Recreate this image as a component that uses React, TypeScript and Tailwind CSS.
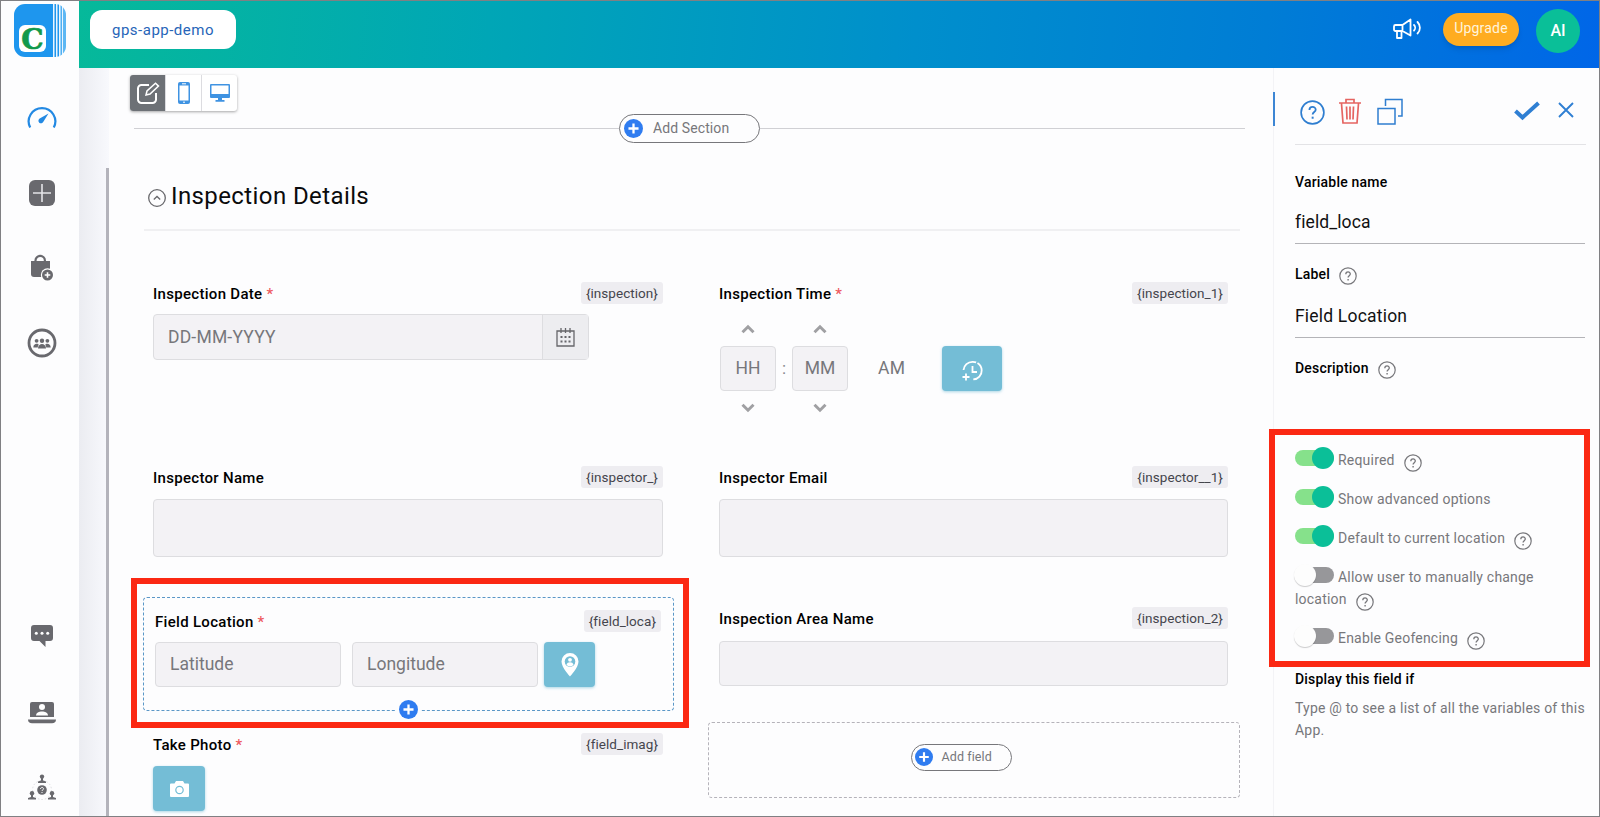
import type { ReactNode } from "react";
import clsx from "clsx";

interface FieldProps {
  label: string;
  variable: string;
  required?: boolean;
  className?: string;
  children?: ReactNode;
}

interface OptionProps {
  label: string;
  on?: boolean;
  help?: boolean;
}

const inputClass =
  "flex items-center rounded border border-[#dddde0] bg-[#f3f2f5] text-[17.5px] text-[#77777b]";

const actionClass =
  "flex items-center justify-center rounded bg-[#74bdd6] text-white shadow-[0_1px_3px_rgba(116,189,214,0.6)]";

function Logo() {
  return (
    <svg width="52" height="54" viewBox="0 0 52 54">
      <defs>
        <clipPath id="logo-clip">
          <rect x="0" y="0" width="52" height="53" rx="11" />
        </clipPath>
      </defs>
      <g clipPath="url(#logo-clip)">
        <rect width="52" height="53" fill="#eaf5ff" />
        <rect width="39" height="53" fill="#1e96ee" />
        <rect x="40.5" width="1.5" height="53" fill="#1e96ee" />
        <rect x="43.5" width="1.5" height="53" fill="#1e96ee" />
        <rect x="46.5" width="1.5" height="53" fill="#4fb0f2" />
        <rect x="49" width="3" height="53" fill="#5db7f3" />
      </g>
      <rect x="5" y="21" width="27" height="27" rx="6" fill="#fff" />
      <text
        x="18.5"
        y="45"
        textAnchor="middle"
        fontFamily="'DejaVu Serif', serif"
        fontWeight="700"
        fontSize="28"
        stroke="#12994b"
        strokeWidth="0.7"
        fill="#12994b"
      >
        C
      </text>
    </svg>
  );
}

function GaugeIcon() {
  return (
    <svg width="30" height="24" viewBox="0 0 30 24" fill="none">
      <path
        d="M3.2 22.5A13.3 13.3 0 1 1 26.8 22.5"
        stroke="#2389e3"
        strokeWidth="2.2"
      />
      <path d="M21.5 8.5l-5 8a2.6 2.6 0 1 1-3.4-3.2z" fill="#2389e3" />
    </svg>
  );
}

function PlusSquareIcon() {
  return (
    <svg width="26" height="26" viewBox="0 0 26 26">
      <rect width="26" height="26" rx="6" fill="#69696e" />
      <path d="M13 4v18M4 13h18" stroke="#e4e4e8" strokeWidth="1.6" />
    </svg>
  );
}

function BagIcon() {
  return (
    <svg width="24" height="28" viewBox="0 0 24 28" fill="none">
      <path d="M5.5 9V6.500a4.700 4.700 0 0 1 9.400 0V9" stroke="#69696e" strokeWidth="2.2" />
      <path d="M1 7h19v16H4a3 3 0 0 1-3-3z" fill="#69696e" />
      <circle cx="17.5" cy="21" r="6.7" fill="#fff" />
      <circle cx="17.5" cy="21" r="5.5" fill="#69696e" />
      <path d="M17.5 18.2v5.6M14.7 21h5.6" stroke="#fff" strokeWidth="1.6" />
    </svg>
  );
}

function CommunityIcon() {
  return (
    <svg width="30" height="30" viewBox="0 0 30 30">
      <circle cx="15" cy="15" r="13" fill="none" stroke="#69696e" strokeWidth="2.8" />
      <g fill="#69696e">
        <circle cx="9.6" cy="12.8" r="1.9" />
        <circle cx="20.4" cy="12.8" r="1.9" />
        <circle cx="15" cy="12.8" r="2.2" />
        <path d="M6.3 19.5c0-4.500 5-4.500 5.500-2.500-.8.7-1 1.500-1 2.500z" />
        <path d="M23.7 19.5c0-4.500-5-4.500-5.500-2.500.8.7 1 1.500 1 2.500z" />
        <path d="M11 20.5c0-6 8-6 8 0z" />
      </g>
    </svg>
  );
}

function ChatIcon() {
  return (
    <svg width="24" height="24" viewBox="0 0 24 24" fill="#69696e">
      <path d="M4 1h16a3 3 0 0 1 3 3v10a3 3 0 0 1-3 3h-4.500v6L9.500 17H4a3 3 0 0 1-3-3V4a3 3 0 0 1 3-3z" />
      <g fill="#fff">
        <circle cx="6.3" cy="9.3" r="1.5" />
        <circle cx="12" cy="9.3" r="1.5" />
        <circle cx="17.7" cy="9.3" r="1.5" />
      </g>
    </svg>
  );
}

function LaptopUserIcon() {
  return (
    <svg width="28" height="24" viewBox="0 0 28 24" fill="#69696e">
      <path d="M4 1h20a2 2 0 0 1 2 2v13H2V3a2 2 0 0 1 2-2z" />
      <circle cx="14" cy="6" r="3" fill="#fff" />
      <path d="M8 14.500c0-5.500 12-5.500 12 0z" fill="#fff" />
      <path d="M0 18.500h28c0 2.600-1.500 3.700-4 3.700H4c-2.500 0-4-1.100-4-3.700z" />
    </svg>
  );
}

function NetworkIcon() {
  return (
    <svg width="28" height="26" viewBox="0 0 28 26">
      <circle cx="14" cy="16" r="9.5" fill="none" stroke="#dcdce0" strokeDasharray="1.5 2" />
      <g fill="#69696e">
        <circle cx="14" cy="2.6" r="2.2" />
        <path d="M13 4h2v2.500l3 1V9h-8V7.500l3-1z" />
        <circle cx="4" cy="19.2" r="2.2" />
        <path d="M3 20h2v3l3 1v1.500H0V24l3-1z" />
        <circle cx="24" cy="19.2" r="2.2" />
        <path d="M23 20h2v3l3 1v1.500h-8V24l3-1z" />
        <circle cx="14" cy="16" r="4.8" />
      </g>
      <path
        d="M12.5 15c0-2 3-2 3-.2 0 1.200-1.500 1-1.500 2.200M14 18v1"
        fill="none"
        stroke="#fff"
      />
    </svg>
  );
}

function HelpIcon({ size = 18, className }: { size?: number; className?: string }) {
  return (
    <svg
      width={size}
      height={size}
      viewBox="0 0 18 18"
      fill="none"
      stroke="currentColor"
      className={className}
    >
      <circle cx="9" cy="9" r="8.2" strokeWidth="1.2" />
      <path d="M6.8 7.200c0-3 4.500-2.900 4.500-.2 0 1.700-2.200 1.700-2.200 3.500" strokeWidth="1.3" />
      <path d="M9.1 12v1.500" strokeWidth="1.4" />
    </svg>
  );
}

function PlusCircle({ size }: { size: number }) {
  return (
    <svg width={size} height={size} viewBox="0 0 20 20" className="shrink-0">
      <circle cx="10" cy="10" r="10" fill="#2f7cf0" />
      <path d="M10 4.700v10.600M4.700 10h10.600" stroke="#fff" strokeWidth="2.4" />
    </svg>
  );
}

function Caret({ down }: { down?: boolean }) {
  return (
    <svg
      width="14"
      height="10"
      viewBox="0 0 14 10"
      fill="none"
      className={down ? "rotate-180" : undefined}
    >
      <path d="M1.5 8.200L7 2.800l5.500 5.400" stroke="#a0a0a3" strokeWidth="3" />
    </svg>
  );
}

function VariableTag({ children }: { children: ReactNode }) {
  return (
    <span className="flex h-[22px] items-center rounded-[3px] bg-[#eeedf1] px-[5px] text-[13.5px] tracking-[0.05px] text-[#45454d]">
      {children}
    </span>
  );
}

function Field({ label, variable, required, className, children }: FieldProps) {
  return (
    <div className={clsx("flex flex-col", className)}>
      <div className="flex h-[22px] items-center justify-between">
        <span className="pt-0.5 text-[15px] font-medium tracking-[0.3px] text-black">
          {label}
          {required && <span className="text-[#ee5a5f]"> *</span>}
        </span>
        <VariableTag>{variable}</VariableTag>
      </div>
      {children}
    </div>
  );
}

function TimeUnit({ unit }: { unit: string }) {
  return (
    <div className="flex w-14 flex-col items-center">
      <Caret />
      <div className={clsx(inputClass, "my-3 h-[45px] w-full justify-center")}>{unit}</div>
      <Caret down />
    </div>
  );
}

function Option({ label, on, help }: OptionProps) {
  return (
    <p className="mb-[17px] leading-[22px]">
      <span
        className={clsx(
          "relative -my-1 mr-1 inline-block h-4 w-[39px] rounded-full align-[3px]",
          on ? "bg-[#86e18b]" : "bg-[#97979a]"
        )}
      >
        <span
          className={clsx(
            "absolute -top-[3px] size-[22px] rounded-full",
            on
              ? "right-0 bg-[#0bbf98]"
              : "-left-px bg-[#fdfdfd] shadow-[0_1px_1px_rgba(0,0,0,0.2)]"
          )}
        />
      </span>
      {label}
      {help && <HelpIcon className="-my-1 ml-[9px] inline-block align-[-3px]" />}
    </p>
  );
}

function Sidebar() {
  return (
    <aside className="flex w-[78px] shrink-0 flex-col items-center bg-[#fdfdfe]">
      <div className="mt-[3px]">
        <Logo />
      </div>
      <nav className="mt-[47px] ml-1 flex flex-1 flex-col items-center">
        <GaugeIcon />
        <div className="mt-[51px]">
          <PlusSquareIcon />
        </div>
        <div className="mt-12">
          <BagIcon />
        </div>
        <div className="mt-[46px]">
          <CommunityIcon />
        </div>
        <div className="mt-auto mb-[53px]">
          <ChatIcon />
        </div>
        <div className="mb-[49px]">
          <LaptopUserIcon />
        </div>
        <div className="mb-[16px]">
          <NetworkIcon />
        </div>
      </nav>
    </aside>
  );
}

function TopBar() {
  return (
    <header className="flex h-[67px] shrink-0 items-start bg-linear-[95deg,#06b99a_0%,#00a6b6_27%,#008fcc_55%,#007dd5_78%,#0066e8_100%]">
      <div className="mt-[9px] ml-[11px] flex h-[39px] w-[146px] items-center justify-center rounded-xl bg-white pt-0.5 text-[15px] tracking-[0.5px] text-[#2765b8]">
        gps-app-demo
      </div>
      <div className="ml-auto flex items-start">
        <svg
          width="30"
          height="22"
          viewBox="0 0 30 22"
          fill="none"
          stroke="#fff"
          strokeWidth="1.8"
          strokeLinejoin="round"
          strokeLinecap="round"
          className="mt-[17px] mr-[21px]"
        >
          <path d="M3.5 7h7l8-5.500v16l-8-4.500h-7A1.500 1.500 0 0 1 2 11.500v-3A1.500 1.500 0 0 1 3.500 7zM10.500 7v6M5 13v7h4.500v-7" />
          <path d="M22 7c1.500 1.500 1.500 4 0 5.500M25.500 4c3.200 3.200 3.200 8.500 0 11.500" />
        </svg>
        <div className="mt-3 flex h-[33px] w-[76px] items-center justify-center rounded-full bg-[#ffac20] pb-0.5 text-[14px] tracking-[0.2px] text-[#fff4dc] shadow-md">
          Upgrade
        </div>
        <div className="mt-2 mr-[19px] ml-[17px] flex size-11 items-center justify-center rounded-full bg-[#0abf98] text-[16px] font-medium text-white">
          AI
        </div>
      </div>
    </header>
  );
}

function ViewSwitch() {
  return (
    <div className="ml-[21px] flex h-9 w-[107px] divide-x divide-[#dcdce0] overflow-hidden rounded-[3px] bg-white shadow-[0_1px_3px_rgba(0,0,0,0.35)]">
      <div className="flex flex-1 items-center justify-center bg-[#6d7176]">
        <svg width="24" height="24" viewBox="0 0 24 24" fill="none" stroke="#fff" strokeWidth="2">
          <path d="M13 4H5.500A3.500 3.500 0 0 0 2 7.500v11A3.500 3.500 0 0 0 5.500 22h11a3.500 3.500 0 0 0 3.500-3.500V12" />
          <path d="M10 14l1-4 8.500-7.700 3 2.800L14 13z" strokeWidth="1.5" />
        </svg>
      </div>
      <div className="flex flex-1 items-center justify-center">
        <svg width="12" height="22" viewBox="0 0 12 22">
          <rect width="12" height="22" rx="2" fill="#3f93e2" />
          <rect x="1.500" y="3.500" width="9" height="15" fill="#fff" />
          <path d="M4 1.800h4M5 20.200h2" stroke="#fff" />
        </svg>
      </div>
      <div className="flex flex-1 items-center justify-center">
        <svg width="20" height="18" viewBox="0 0 20 18" fill="#3f93e2">
          <path d="M1 0h18a1 1 0 0 1 1 1v12a1 1 0 0 1-1 1H1a1 1 0 0 1-1-1V1a1 1 0 0 1 1-1z" />
          <path d="M1.5 1.500h17V10h-17z" fill="#fff" />
          <path d="M8 14h4v2h2.500v1.800h-9V16H8z" />
        </svg>
      </div>
    </div>
  );
}

function FormCanvas() {
  return (
    <main className="flex min-w-0 flex-1 flex-col pt-[7px]">
      <ViewSwitch />

      <div className="mr-[28px] ml-[25px] mt-[3px] flex items-center">
        <div className="h-px flex-1 bg-[#d0d0d4]" />
        <div className="flex h-[29px] w-[141px] items-center rounded-full border border-[#77777b] pl-1">
          <PlusCircle size={19} />
          <span className="ml-[10px] text-[14px] tracking-[0.1px] text-[#77777b]">Add Section</span>
        </div>
        <div className="h-px flex-1 bg-[#d0d0d4]" />
      </div>

      <div className="mr-[33px] ml-[35px] flex h-[88px] items-start border-b-2 border-[#f0f0f2] pt-[35px]">
        <svg
          width="18"
          height="18"
          viewBox="0 0 18 18"
          fill="none"
          stroke="#68686c"
          className="mt-[11px] ml-1"
        >
          <circle cx="9" cy="9" r="8.3" strokeWidth="1.3" />
          <path d="M5.8 10.500L9 7.500l3.200 3" strokeWidth="1.3" />
        </svg>
        <h1 className="ml-[5px] text-[24px] leading-[36px] tracking-[0.4px] text-[#0b0b0c]">
          Inspection Details
        </h1>
      </div>

      <div className="flex flex-1 pt-[51px]">
        <div className="ml-[34px] flex w-[531px] flex-col">
          <Field
            label="Inspection Date"
            variable="{inspection}"
            required
            className="mr-[11px] ml-[10px] h-[184px]"
          >
            <div className={clsx(inputClass, "mt-[10px] h-[46px] w-[436px]")}>
              <span className="flex-1 pl-[14px] tracking-[0.2px]">DD-MM-YYYY</span>
              <span className="flex h-full w-[46px] items-center justify-center border-l border-[#dddde0] bg-[#ededf0]">
                <svg width="19" height="19" viewBox="0 0 19 19" fill="none" stroke="#66666a">
                  <path d="M1 3h17v15H1zM5 0v5M9.500 0v5M14 0v5" strokeWidth="1.3" />
                  <path
                    d="M4.500 9h2M8.500 9h2M12.500 9h2M4.500 13.500h2M8.500 13.500h2M12.500 13.500h2"
                    strokeWidth="2"
                  />
                </svg>
              </span>
            </div>
          </Field>

          <Field
            label="Inspector Name"
            variable="{inspector_}"
            className="mr-[11px] ml-[10px] h-[131px]"
          >
            <div className={clsx(inputClass, "mt-[11px] h-[58px]")} />
          </Field>

          <div className="relative h-[114px] rounded-sm border border-dashed border-[#5b97c7] pt-3 pr-3 pl-[11px]">
            <Field label="Field Location" variable="{field_loca}" required>
              <div className="mt-[10px] flex">
                <div className={clsx(inputClass, "h-[45px] w-[186px] pl-[14px]")}>Latitude</div>
                <div className={clsx(inputClass, "ml-[11px] h-[45px] w-[186px] pl-[14px]")}>
                  Longitude
                </div>
                <div className={clsx(actionClass, "ml-[6px] h-[45px] w-[51px]")}>
                  <svg width="18" height="24" viewBox="0 0 18 24">
                    <path
                      d="M9 0a8.500 8.500 0 0 1 8.500 8.500C17.500 14.500 9 23.500 9 23.500S.5 14.500.5 8.500A8.500 8.500 0 0 1 9 0z"
                      fill="#fff"
                    />
                    <circle cx="9" cy="8.5" r="5.3" fill="#74bdd6" />
                    <circle cx="9" cy="6.8" r="1.9" fill="#fff" />
                    <path d="M5.500 11.700c.5-3.300 6.500-3.300 7 0-2 2-5 2-7 0z" fill="#fff" />
                  </svg>
                </div>
              </div>
            </Field>
            <span className="absolute -bottom-[9px] left-[252px] bg-[#fdfdfe] px-[3px]">
              <PlusCircle size={19} />
            </span>
            {/* highlight frame */}
            <div className="pointer-events-none absolute -top-5 -left-[13px] h-[150px] w-[558px] border-6 border-[#fb2813]" />
          </div>

          <Field
            label="Take Photo"
            variable="{field_imag}"
            required
            className="mt-[22px] mr-[11px] ml-[10px]"
          >
            <div className={clsx(actionClass, "mt-[11px] h-[45px] w-[52px]")}>
              <svg width="19" height="16" viewBox="0 0 19 16" fill="#fff">
                <path d="M6 0h7l1.500 2.500H18a1 1 0 0 1 1 1V15a1 1 0 0 1-1 1H1a1 1 0 0 1-1-1V3.500a1 1 0 0 1 1-1h3.500z" />
                <circle cx="9.5" cy="9" r="3.7" fill="none" stroke="#74bdd6" strokeWidth="1.2" />
              </svg>
            </div>
          </Field>
        </div>

        <div className="ml-[34px] flex w-[532px] flex-col">
          <Field
            label="Inspection Time"
            variable="{inspection_1}"
            required
            className="mr-[12px] ml-[11px] h-[184px]"
          >
            <div className="mt-5 ml-px flex items-center">
              <TimeUnit unit="HH" />
              <span className="w-4 text-center text-[17px] text-[#88888c]">:</span>
              <TimeUnit unit="MM" />
              <span className="ml-[30px] w-[64px] text-[17.5px] tracking-[0.3px] text-[#77777b]">
                AM
              </span>
              <div className={clsx(actionClass, "h-[45px] w-[60px]")}>
                <svg
                  width="22"
                  height="22"
                  viewBox="0 0 22 22"
                  fill="none"
                  stroke="#fff"
                  strokeWidth="1.8"
                  className="mt-1"
                >
                  <path
                    d="M2.500 10a9 9 0 0 1 9-8.200 8.700 8.700 0 0 1 .8 17.600"
                    strokeDasharray="17 1.5 30"
                  />
                  <path d="M11.500 6v6h4.500M5 13.500v7M1.500 17h7" />
                </svg>
              </div>
            </div>
          </Field>

          <Field
            label="Inspector Email"
            variable="{inspector__1}"
            className="mr-[12px] ml-[11px] h-[141px]"
          >
            <div className={clsx(inputClass, "mt-[11px] h-[58px]")} />
          </Field>

          <Field
            label="Inspection Area Name"
            variable="{inspection_2}"
            className="mr-[12px] ml-[11px]"
          >
            <div className={clsx(inputClass, "mt-[12px] h-[45px]")} />
          </Field>

          <div className="mt-[36px] flex h-[76px] items-center justify-center rounded-sm border border-dashed border-[#b5b3ba] pr-[26px] pb-1.5">
            <div className="flex h-[27px] w-[101px] items-center rounded-full border border-[#77777b] pl-[3px]">
              <PlusCircle size={18} />
              <span className="ml-[9px] text-[12.5px] tracking-[0.1px] text-[#77777b]">
                Add field
              </span>
            </div>
          </div>
        </div>
      </div>
    </main>
  );
}

function SettingsPanel() {
  return (
    <section className="flex w-[326px] shrink-0 flex-col border-l border-[#f3f3f6] text-[14px] tracking-[0.2px] text-[#77777b]">
      <div className="flex h-[77px] shrink-0 items-start">
        <div className="mt-6 -ml-px h-[34px] w-0.5 bg-[#3d86d4]" />
        <div className="ml-[20px] flex h-[77px] w-[291px] items-start border-b border-[#e3e3e6] pt-[30px]">
          <HelpIcon size={25} className="mt-0.5 ml-[5px] text-[#2f7ed0]" />
          <svg
            width="24"
            height="26"
            viewBox="0 0 24 26"
            fill="none"
            stroke="#e56461"
            strokeWidth="1.7"
            className="ml-[13px]"
          >
            <path d="M1 5h22M8 5V1.500h8V5M3.500 5.500L5 25h14l1.500-19.500M8.500 8.500l.5 13M12 8.500v13M15.500 8.500l-.5 13" />
          </svg>
          <svg
            width="26"
            height="28"
            viewBox="0 0 26 28"
            fill="none"
            stroke="#2f7ed0"
            strokeWidth="1.5"
            className="ml-[15px]"
          >
            <path d="M1 10.500h17V26H1zM8.500 8V1.500H25V18h-4" />
          </svg>
          <svg
            width="26"
            height="20"
            viewBox="0 0 26 20"
            fill="none"
            stroke="#2f7fd3"
            strokeWidth="4"
            className="mt-[3px] ml-auto"
          >
            <path d="M1.500 10l7 6.500L24.500 2" />
          </svg>
          <svg
            width="16"
            height="16"
            viewBox="0 0 16 16"
            stroke="#2f7fd3"
            strokeWidth="1.9"
            className="mt-1 mr-[12px] ml-[18px]"
          >
            <path d="M1 1l14 14M15 1L1 15" />
          </svg>
        </div>
      </div>

      <div className="mr-[14px] ml-[21px] flex flex-1 flex-col">
        <label className="mt-[27px] leading-5 font-medium text-black">Variable name</label>
        <div className="mt-[13px] h-[39px] border-b border-[#b4b4b8] text-[17.5px] leading-[35px] tracking-[0.1px] text-[#111]">
          field_loca
        </div>

        <label className="mt-[20px] flex h-5 items-center font-medium text-black">
          Label
          <HelpIcon className="mt-[4px] ml-[9px] text-[#77777b]" />
        </label>
        <div className="mt-[15px] h-[39px] border-b border-[#b4b4b8] text-[17.5px] leading-[34px] tracking-[0.2px] text-[#111]">
          Field Location
        </div>

        <label className="mt-[20px] flex h-5 items-center font-medium text-black">
          Description
          <HelpIcon className="mt-[4px] ml-[9px] text-[#77777b]" />
        </label>

        <div className="relative mt-[71px]">
          <Option label="Required" on help />
          <Option label="Show advanced options" on />
          <Option label="Default to current location" on help />
          <Option label="Allow user to manually change location" help />
          <Option label="Enable Geofencing" help />
          {/* highlight frame */}
          <div className="pointer-events-none absolute -top-[20px] -left-[26px] h-[238px] w-[321px] border-6 border-[#fb2813]" />
        </div>

        <h2 className="mt-[3px] leading-5 font-medium text-black">Display this field if</h2>
        <p className="-mr-2 mt-[9px] leading-[21.5px]">
          Type @ to see a list of all the variables of this App.
        </p>
      </div>
    </section>
  );
}

export default function App() {
  return (
    <div className="flex h-[817px] w-[1600px] overflow-hidden border border-[#808083] bg-[#fdfdfe] font-[Roboto,sans-serif]">
      <Sidebar />
      <div className="flex min-w-0 flex-1 flex-col">
        <TopBar />
        <div className="flex min-h-0 flex-1">
          <div className="flex w-[30px] shrink-0 flex-col bg-linear-to-r from-[#ebecf1] to-[#f8f9fd]">
            <div className="mt-[100px] ml-auto w-[3px] flex-1 bg-[#b3b3bb]" />
          </div>
          <FormCanvas />
          <SettingsPanel />
        </div>
      </div>
    </div>
  );
}
